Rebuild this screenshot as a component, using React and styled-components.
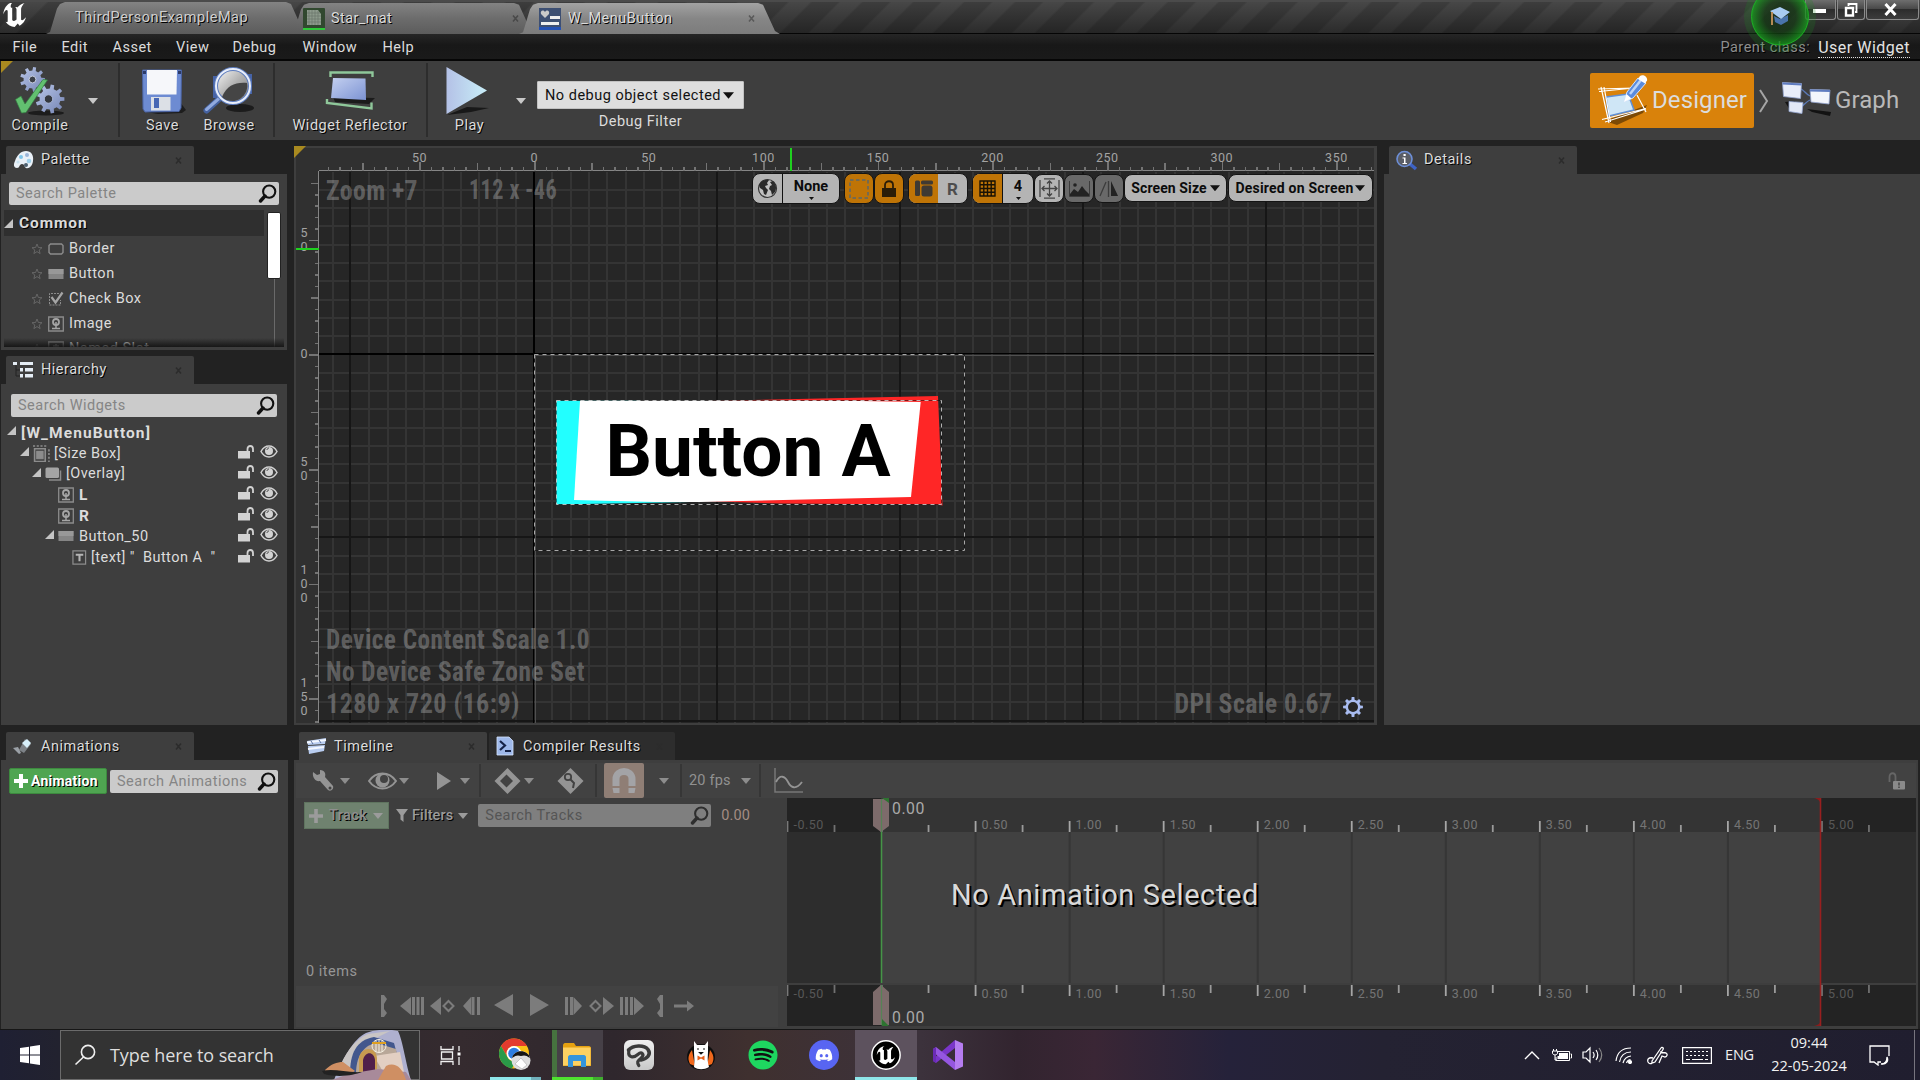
import React from "react";
import styled, { createGlobalStyle } from "styled-components";
import { FaSpotify, FaDiscord } from "react-icons/fa";

const Global = createGlobalStyle`
  * { box-sizing: border-box; }
  body { margin: 0; background: #222; overflow: hidden; }
  svg { display: block; flex: none; }
`;

const Screen = styled.div`
  width: 1920px;
  height: 1080px;
  overflow: hidden;
  display: flex;
  flex-direction: column;
  background: #222;
  color: #dcdcdc;
  font: 14.5px/18px Roboto, "Liberation Sans", sans-serif;
  letter-spacing: 0.5px;
  white-space: pre;
  position: relative;
`;

const Gap = styled.div`
  flex: none;
  width: ${(p) => p.$w || 0}px;
  height: ${(p) => p.$h || 0}px;
`;

const Label = styled.span`
  display: block;
  color: ${(p) => p.$c || "inherit"};
  font-size: ${(p) => p.$size || 14.5}px;
  font-weight: ${(p) => p.$weight || 400};
  letter-spacing: ${(p) => (p.$ls === undefined ? 0.5 : p.$ls)}px;
  padding-top: ${(p) => p.$drop || 0}px;
  text-shadow: ${(p) => (p.$shadow ? "1px 1px 0 #000" : "none")};
`;

/* ---------- title bar ---------- */

const TitleBar = styled.div`
  height: 34px;
  flex: none;
  display: flex;
  background:
    linear-gradient(180deg, rgba(70, 70, 70, 0.25) 0, rgba(18, 18, 18, 0.55) 100%),
    repeating-linear-gradient(135deg, #3c3c3c 0 18px, #4a4a4a 20px 34px, #3c3c3c 36px);
  border-bottom: 1px solid #050505;
  box-shadow: inset 0 2px 0 #4b4b4b;
`;

const LogoCell = styled.div`
  width: 46px;
  padding: 3px 0 0 3px;
  flex: none;
`;

const WindowTab = styled.div`
  display: flex;
  align-items: center;
  flex: none;
  width: ${(p) => p.$w}px;
  height: ${(p) => (p.$top ? 34 - p.$top : 31)}px;
  margin: ${(p) => p.$top || 3}px 0 0 ${(p) => -(p.$overlap || 0)}px;
  padding-left: ${(p) => p.$pad}px;
  z-index: ${(p) => (p.$front ? 2 : 1)};
  background: ${(p) =>
    p.$front
      ? "linear-gradient(180deg,#a2a2a2,#868686 50%,#7c7c7c)"
      : "linear-gradient(180deg,#838383,#6c6c6c 50%,#5c5c5c)"};
  clip-path: polygon(0 100%, 4px 94%, 11px 20%, 14px 6%, 19px 0, calc(100% - 22px) 0, calc(100% - 17px) 6%, calc(100% - 5px) 90%, 100% 100%);
`;

const Spacer = styled.div`
  flex: 1;
`;

const WinButton = styled.div`
  width: ${(p) => p.$w}px;
  height: 20px;
  margin-left: 1px;
  display: flex;
  align-items: center;
  justify-content: center;
  padding-right: ${(p) => p.$pr || 0}px;
  background: linear-gradient(180deg, #6e6e6e, #4a4a4a 45%, #2c2c2c 50%, #3c3c3c);
  border: 1px solid #8b8b8b;
  border-top: 0;
  border-radius: 0 0 3px 3px;
`;

const MenuBar = styled.div`
  height: 27px;
  flex: none;
  display: flex;
  align-items: center;
  padding: 2px 10px 0 12.5px;
  background: linear-gradient(180deg, #262626, #181818 45%, #1a1a1a);
  border-bottom: 2px solid #060606;
`;

const MenuItem = styled.span`
  width: ${(p) => p.$w}px;
  flex: none;
`;

const UserWidgetLink = styled.span`
  font-size: 16px;
  color: #e4e4e4;
  margin-left: 8px;
  border-bottom: 1px dotted #ddd;
  line-height: 19px;
`;

const GlowBadge = styled.div`
  position: absolute;
  left: 1743px;
  top: 0;
  z-index: 3;
`;

/* ---------- tool bar ---------- */

const ToolBar = styled.div`
  height: 79px;
  flex: none;
  display: flex;
  background: #3e3e3e;
  position: relative;
  border-left: 1px solid #222;
`;

const CornerMark = styled.div`
  position: absolute;
  left: ${(p) => p.$x || 0}px;
  top: ${(p) => p.$y || 0}px;
  width: 12px;
  height: 12px;
  background: #a98a20;
  clip-path: polygon(0 0, 100% 0, 0 100%);
`;

const ToolButton = styled.div`
  width: ${(p) => p.$w}px;
  flex: none;
  display: flex;
  flex-direction: column;
  align-items: center;
  padding-top: 4px;
`;

const ToolIcon = styled.div`
  height: 52px;
  display: flex;
  align-items: center;
  justify-content: center;
  padding: 0 ${(p) => p.$pr || 0}px 1px 0;
`;

const Separator = styled.div`
  width: 2px;
  flex: none;
  margin: 2px 0 3px;
  background: #2d2d2d;
`;

const ShortLine = styled.div`
  width: 2px;
  height: 33px;
  flex: none;
  background: #363636;
`;

const CaretCell = styled.div`
  width: ${(p) => p.$w}px;
  flex: none;
  display: flex;
  justify-content: center;
  align-items: center;
`;

const DebugColumn = styled.div`
  width: 207px;
  display: flex;
  flex-direction: column;
  align-items: center;
  padding-top: 20px;
`;

const DebugCombo = styled.div`
  width: 207px;
  height: 28px;
  display: flex;
  align-items: center;
  gap: 2px;
  padding-left: 7px;
  color: #111;
  background: #dedede;
  border: 1px solid #c2c2c2;
  border-radius: 1px;
  margin-bottom: 4px;
`;

const ModeButton = styled.div`
  display: flex;
  align-items: center;
  width: ${(p) => p.$w}px;
  height: 55px;
  margin-top: 12px;
  padding: 0 0 1px ${(p) => p.$pad}px;
  gap: ${(p) => p.$gap}px;
  border-radius: 2px;
  background: ${(p) => (p.$active ? "#d9820b" : "transparent")};
`;

/* ---------- panels ---------- */

const Main = styled.div`
  height: 579px;
  margin-top: 6px;
  flex: none;
  display: flex;
  padding-left: 1px;
`;

const Column = styled.div`
  width: ${(p) => p.$w}px;
  margin-right: ${(p) => p.$gap || 0}px;
  flex: none;
  display: flex;
  flex-direction: column;
`;

const TabStrip = styled.div`
  height: 28px;
  flex: none;
  display: flex;
  gap: 2px;
  padding-left: 5px;
`;

const PanelTab = styled.div`
  width: ${(p) => p.$w || 188}px;
  display: flex;
  align-items: center;
  padding: 0 12px 0 7px;
  background: ${(p) => (p.$idle ? "#2d2d2d" : "#3e3e3e")};
  border-radius: 2px 2px 0 0;
`;

const TabIcon = styled.span`
  width: ${(p) => p.$w || 28}px;
  flex: none;
`;

const PanelBody = styled.div`
  flex: 1;
  min-height: 0;
  background: #3e3e3e;
  overflow: hidden;
  display: flex;
  flex-direction: column;
`;

const HierarchyBody = styled(PanelBody)`
  flex: none;
  height: 341px;
`;

const SearchBox = styled.div`
  height: 23px;
  width: ${(p) => p.$w}px;
  margin: ${(p) => p.$m || 0};
  flex: none;
  display: flex;
  align-items: center;
  justify-content: space-between;
  padding: 0 2px 0 7px;
  border-radius: 2px;
  background: ${(p) => (p.$dim ? "#7f7f7f" : "#cbcbcb")};
  color: ${(p) => (p.$dim ? "#555" : "#858585")};
`;

const PaletteList = styled.div`
  display: flex;
  flex: 1;
  min-height: 0;
  margin: 5px 3px 3px 3px;
  overflow: hidden;
  position: relative;
`;

const PaletteRows = styled.div`
  width: 260px;
`;

const CategoryRow = styled.div`
  height: 26px;
  display: flex;
  align-items: center;
  gap: 6px;
  background: #2f2f2f;
`;

const PaletteRow = styled.div`
  height: 25px;
  display: flex;
  align-items: center;
  padding-left: 27px;
`;

const PaletteGlyph = styled.span`
  width: 21px;
  margin-left: 5px;
`;

const ScrollTrack = styled.div`
  width: 14px;
  margin-left: 3px;
  display: flex;
  flex-direction: column;
  align-items: center;
`;

const ScrollThumb = styled.div`
  width: 14px;
  height: 67px;
  margin-top: 2px;
  background: #fff;
  border: 1px solid #222;
  border-radius: 2px;
`;

const ScrollLine = styled.div`
  width: 1px;
  flex: 1;
  background: #6a6a6a;
`;

const BottomFade = styled.div`
  position: absolute;
  left: 0;
  right: 0;
  bottom: 0;
  height: 9px;
  background: linear-gradient(180deg, rgba(20, 20, 20, 0), rgba(16, 16, 16, 0.85));
`;

const TreeRow = styled.div`
  height: 20.8px;
  flex: none;
  display: flex;
  align-items: center;
  padding-left: ${(p) => p.$indent}px;
`;

const TreeArrow = styled.span`
  width: 13px;
  flex: none;
  padding-bottom: 3px;
`;

const TreeGlyph = styled.span`
  width: ${(p) => p.$w || 21}px;
  flex: none;
`;

const TreeState = styled.span`
  margin-left: auto;
  width: 49px;
  display: flex;
  gap: 5px;
  padding-bottom: 3px;
  align-items: center;
`;

/* ---------- designer viewport ---------- */

const Viewport = styled.div`
  position: relative;
  height: 579px;
  border: 2px solid #3e3e3e;
  border-right-width: 3px;
  background: #262626;
`;

const ViewportBar = styled.div`
  position: absolute;
  right: 0;
  top: 25px;
  width: 622px;
  display: flex;
  align-items: flex-start;
`;

const Pill = styled.div`
  display: flex;
  flex: none;
  width: ${(p) => p.$w}px;
  height: ${(p) => p.$h || 31}px;
  margin: ${(p) => p.$mt || 0}px ${(p) => p.$mr || 0}px 0 0;
  border: 1px solid #141414;
  border-radius: 8px;
  overflow: hidden;
  color: #0c0c0c;
  background: ${(p) => p.$bg || "#b4b4b4"};
`;

const PillPart = styled.div`
  width: ${(p) => p.$w || "auto"};
  flex: ${(p) => (p.$w ? "none" : 1)};
  display: flex;
  flex-direction: ${(p) => (p.$col ? "column" : "row")};
  align-items: center;
  justify-content: center;
  gap: ${(p) => p.$gap || 0}px;
  background: ${(p) => p.$bg || "transparent"};
  border-right: ${(p) => (p.$line ? "1px solid #111" : "0")};
`;

/* ---------- bottom area ---------- */

const Bottom = styled.div`
  height: 297px;
  margin-top: 7px;
  flex: none;
  display: flex;
  padding-left: 1px;
`;

const AnimationTools = styled.div`
  display: flex;
  align-items: center;
  padding: 8px 0 0 8px;
  gap: 3px;
`;

const AddAnimation = styled.div`
  width: 98px;
  height: 26px;
  display: flex;
  align-items: center;
  padding-left: 4px;
  gap: 3px;
  color: #fff;
  background: #4fa551;
  border: 1px solid #3d8a3f;
  border-radius: 2px;
`;

const SequencerBar = styled.div`
  height: 35px;
  margin: 3px 2px 0 2px;
  flex: none;
  display: flex;
  align-items: center;
  background: #424242;
`;

const BarCell = styled.div`
  width: ${(p) => p.$w}px;
  height: 35px;
  flex: none;
  display: flex;
  align-items: center;
  padding-left: ${(p) => p.$pad || 0}px;
  gap: ${(p) => p.$gap || 0}px;
`;

const MagnetBox = styled.div`
  width: 40px;
  height: 35px;
  margin-left: 7px;
  display: flex;
  align-items: center;
  justify-content: center;
  background: #8f7e75;
  border-radius: 2px;
`;

const SequencerBody = styled.div`
  height: 231px;
  display: flex;
`;

const TrackPane = styled.div`
  width: 493px;
  flex: none;
  display: flex;
  flex-direction: column;
`;

const TrackTools = styled.div`
  display: flex;
  align-items: center;
  height: 35px;
  width: 489px;
  padding-left: 10px;
`;

const AddTrack = styled.div`
  width: 85px;
  height: 27px;
  display: flex;
  align-items: center;
  padding-left: 4px;
  gap: 6px;
  color: #8f8f8f;
  background: #6f826f;
  border: 1px solid #5f745f;
`;

const ItemCount = styled.div`
  margin: auto 0 5px 12px;
  color: #969696;
`;

const Transport = styled.div`
  width: 482px;
  height: 41px;
  margin: 0 0 2px 2px;
  background: #424242;
  display: flex;
  align-items: center;
  padding: 0 0 2px 84px;
`;

const TimeArea = styled.div`
  position: relative;
  width: 1129px;
  height: 228px;
`;

const EmptyNotice = styled.div`
  position: absolute;
  left: 164px;
  top: 78px;
  font-size: 29px;
  line-height: 38px;
  letter-spacing: 0.6px;
  color: #dadada;
  text-shadow: 2px 2px 0 #000;
`;

/* ---------- task bar ---------- */

const TaskBar = styled.div`
  height: 51px;
  flex: none;
  display: flex;
  border-top: 1px solid #161616;
  background: linear-gradient(90deg, #1f2033 0, #22222f 3%, #352b2f 24%, #2f272d 32%, #3f302f 39%, #3c323c 48%, #32242f 53%, #3a2635 57%, #25223a 64%, #242232 72%, #201e2f 100%);
  font-family: "Open Sans", "Noto Sans", sans-serif;
  letter-spacing: 0;
  color: #f2f2f2;
`;

const StartCell = styled.div`
  width: 60px;
  display: flex;
  align-items: center;
  justify-content: center;
`;

const TaskSearch = styled.div`
  width: 360px;
  display: flex;
  align-items: center;
  background: #333;
  border: 1px solid #6b6b6b;
  padding-left: 13px;
  color: #dedede;
`;

const TaskCell = styled.div`
  width: ${(p) => p.$w || 61.8}px;
  flex: none;
  display: flex;
  align-items: center;
  justify-content: center;
  padding-top: ${(p) => (p.$active ? 3 : 0)}px;
  background: ${(p) => (p.$active ? "#5d525e" : "transparent")};
  border-bottom: ${(p) => (p.$active ? "3px solid #8ee6ea" : "0")};
`;

const RunningTile = styled.div`
  width: 51px;
  height: 50px;
  display: flex;
  align-items: center;
  justify-content: center;
  background:
    linear-gradient(90deg, ${(p) => p.$c} 0 41px, ${(p) => p.$c2} 41px) 0 47px / 100% 3px no-repeat,
    linear-gradient(90deg, ${(p) => (p.$filled ? "#46723f" : "transparent")} 0 5px, ${(p) => (p.$filled ? "#464047" : "transparent")} 5px);
`;

const TrayCell = styled.div`
  width: ${(p) => p.$w}px;
  flex: none;
  display: flex;
  justify-content: center;
  align-items: center;
`;

const Clock = styled.div`
  width: 90px;
  flex: none;
  text-align: center;
  font-size: 14.5px;
  line-height: 23px;
  padding-top: 1px;
`;

const DesktopEdge = styled.div`
  width: 6px;
  border-left: 1px solid #77757f;
`;

/* ---------- drawings ---------- */

const Caret = ({ w = 10, h = 6, c = "#c8c8c8" }) => (
  <svg width={w} height={h} viewBox="0 0 10 6"><path d="M0 0h10L5 6z" fill={c} /></svg>
);

const CloseMark = ({ c = "#2c2c2c" }) => (
  <svg width="7" height="7" viewBox="0 0 7 7">
    <path d="M1 .5l5 6M6 .5l-5 6" fill="none" stroke={c} strokeWidth="1.600" />
  </svg>
);

const Magnifier = ({ c = "#111" }) => (
  <svg width="19" height="19" viewBox="0 0 19 19" fill="none" stroke={c}>
    <circle cx="11.2" cy="7.6" r="6.1" strokeWidth="2.1" />
    <path d="M7 12 2.500 17" strokeWidth="3.4" strokeLinecap="round" />
  </svg>
);

const U_PATH =
  "M19.13 13.729c-.206.997-1.126 3.557-4.06 4.942l-1.179-1.325-1.988 2a7.338 7.338 0 01-5.804-2.978 2.859 2.859 0 00.65.123c.326.006.678-.114.678-.66v-5.394a.89.89 0 00-1.116-.89c-.92.212-1.656 2.509-1.656 2.509a7.304 7.304 0 012.528-5.597 7.408 7.408 0 013.73-1.721c-1.006.573-1.57 1.507-1.57 2.29 0 1.262.76 1.109.984.923v7.28a1.157 1.157 0 00.148.256 1.075 1.075 0 00.88.445c.76 0 1.747-.868 1.747-.868V9.172c0-.6-.452-1.324-.905-1.572 0 0 .838-.149 1.484.346a5.537 5.537 0 01.387-.425c1.508-1.48 2.929-1.902 4.112-2.112 0 0-2.151 1.69-2.151 3.96 0 1.687.043 5.801.043 5.801.799.771 1.986-.342 3.059-1.441z";

const gearPath = (cx, cy, r, r2, teeth) => {
  let d = "";
  for (let i = 0; i < teeth; i++) {
    const a = (i / teeth) * Math.PI * 2;
    const s = Math.PI / teeth;
    [[a - s * 0.55, r2], [a - s * 0.35, r], [a + s * 0.35, r], [a + s * 0.55, r2]].forEach(([t, q], k) => {
      d += `${i === 0 && k === 0 ? "M" : "L"}${(cx + Math.cos(t) * q).toFixed(2)} ${(cy + Math.sin(t) * q).toFixed(2)}`;
    });
  }
  return d + "z";
};

const CompileIcon = () => (
  <svg width="54" height="51" viewBox="13 64 54 51">
    <defs>
      <linearGradient id="gear" x1="0" y1="0" x2="1" y2="1"><stop offset="0" stopColor="#b9c6e8" /><stop offset="1" stopColor="#7484b4" /></linearGradient>
    </defs>
    <ellipse cx="46" cy="112" rx="18" ry="2.5" fill="#1c1c1c" />
    <path d={gearPath(32.5, 78.5, 12.5, 9, 9)} fill="url(#gear)" />
    <circle cx="32.5" cy="78.5" r="3.400" fill="#3c4048" stroke="#dfe7fa" strokeWidth=".8" />
    <path d={gearPath(50, 98, 14.5, 10.5, 9)} fill="url(#gear)" />
    <circle cx="48.5" cy="98" r="4.2" fill="#35383f" stroke="#b8c5e8" strokeWidth=".8" />
    <path d="M15.5 98.500 21 95l4 8L43 78.500l4.500.5L26 111.500l-4.500.5z" fill="#62c070" stroke="#348042" strokeWidth=".7" />
  </svg>
);

const SaveIcon = () => (
  <svg width="46" height="48" viewBox="141 67 46 48">
    <path d="M147 112l34-10 6 8-4 3-24 1z" fill="#1d1d1d" />
    <path d="M143.500 70h39l-.5 38-2 3.500-34 .5-2-3z" fill="#6d8bd2" stroke="#4a62a0" />
    <path d="M148 70h30l-.5 24.500H148z" fill="#f6f7fa" />
    <path d="M152 97h19.500v13.500H152z" fill="#dce0e6" />
    <path d="M155 98h5v10h-5z" fill="#4868b4" />
    <path d="M144 71h3v3h-3zM179 71h3v3h-3z" fill="#2b3a68" />
  </svg>
);

const BrowseIcon = () => (
  <svg width="52" height="50" viewBox="203 66 52 50">
    <defs>
      <linearGradient id="lens" x1="0" y1="0" x2="1" y2="1">
        <stop offset="0" stopColor="#fafafa" /><stop offset=".5" stopColor="#b0b0b0" /><stop offset="1" stopColor="#777" />
      </linearGradient>
    </defs>
    <ellipse cx="240" cy="108" rx="14" ry="4" fill="#1c1c1c" />
    <path d="M213 76h8v22h-8zM246 74h6v20h-6z" fill="#4663a6" />
    <path d="M206.500 110.500 219 99" stroke="#44619f" strokeWidth="6" strokeLinecap="round" />
    <path d="M206.500 109.500 219 98.500" stroke="#91aadf" strokeWidth="3" strokeLinecap="round" />
    <circle cx="233" cy="86" r="17" fill="url(#lens)" stroke="#5d7cbd" strokeWidth="4" />
    <path d="M222 97c5-12 14-15 25-14 2 9-6 18-14 18-5 0-8-1-11-4z" fill="#454545" />
    <circle cx="233" cy="86" r="17" fill="none" stroke="#e8eefb" strokeWidth="2" />
  </svg>
);

const ReflectorIcon = () => (
  <svg width="52" height="44" viewBox="325 70 52 44">
    <defs>
      <linearGradient id="refl" x1="0" y1="0" x2="1" y2="1"><stop offset="0" stopColor="#c4d0f0" /><stop offset="1" stopColor="#7c93d3" /></linearGradient>
    </defs>
    <path d="M334 98l42 1-6 6-34-2z" fill="#1b1b1b" />
    <path d="M334 79l32.500.5.5 21.500-35-2z" fill="url(#refl)" />
    <path d="M331.500 78v-4.500h42V78" fill="none" stroke="#8fc79a" strokeWidth="2.400" />
    <path d="M328 100v4l44.500 5.500v-6" fill="none" stroke="#8fc79a" strokeWidth="2.400" />
  </svg>
);

const PlayIcon = () => (
  <svg width="46" height="51" viewBox="444 64 46 51">
    <defs>
      <linearGradient id="play" x1="0" y1="0" x2="1" y2="0"><stop offset="0" stopColor="#b4c1e6" /><stop offset="1" stopColor="#c8eef8" /></linearGradient>
    </defs>
    <path d="M447 114l20-8 22 1-18 4z" fill="#181818" />
    <path d="M446.500 66v47L487 89.500z" fill="url(#play)" />
  </svg>
);

const DesignerIcon = () => (
  <svg width="52" height="52" viewBox="1595 74 52 52">
    <path d="M1604 121l42-16-4 8-26 12z" fill="#7d4a05" />
    <path d="M1605 97l22-3 6 16-25 6z" fill="#cfe6f6" stroke="#5f8fd6" strokeWidth="1.500" />
    <g stroke="#fff" strokeWidth="1.200" fill="none">
      <path d="M1597 89l36-1M1598 91.500l30-3M1600 87l8 36M1603 87l6.500 35M1601 119.500l44-11M1604 122l41-13M1636 95l9 17" />
    </g>
    <path d="M1623 102l3-10 11-14 8 5-13 15z" fill="#5a8bdd" stroke="#d4e4fb" />
    <path d="M1629 94l11-14" stroke="#bcd4f7" strokeWidth="2.500" />
    <path d="M1623 102l2.500-8 5 4.500z" fill="#fff" />
    <path d="M1637 79l2-3c3-2.500 8 1 7 4.500l-2 3z" fill="#fdfdfd" />
  </svg>
);

const GraphIcon = () => (
  <svg width="52" height="40" viewBox="1781 80 52 40">
    <path d="M1786 102l10-1 3 11-8-2zM1808 109l24 3-1 4-18-4z" fill="#121212" />
    <path d="M1800 88c6 2 6 6 11 8M1798 108c6 0 8-6 13-8" stroke="#5b7ab8" fill="none" strokeWidth="1.300" />
    <path d="M1783.500 82.500l19 1-1 15-17-2z" fill="#e9eefa" stroke="#93a5cf" strokeWidth=".8" />
    <path d="M1811 89.500l20 .5-1 14-18-2z" fill="#f2f5fc" stroke="#93a5cf" strokeWidth=".8" />
    <path d="M1790 101.500l14 1-1 11-13-2z" fill="#e3e9f6" stroke="#93a5cf" strokeWidth=".8" />
    <path d="M1783.500 82.500l19 1v2l-19-1zM1811 89.500l20 .5v2l-20-.5z" fill="#5f7cc0" />
  </svg>
);

const PaletteIcon = () => (
  <svg width="22" height="20" viewBox="0 0 22 20">
    <path d="M4 18c-3 0-4-3-2-7C4 5 8 1 13 1s8 4 7 10c-.500 5-4 8-7 7-2-1-1-4-4-4s-2 4-5 4z" fill="#e9f0f7" />
    <circle cx="8" cy="7" r="2" fill="#7ec4e8" /><circle cx="14" cy="5" r="2" fill="#9ab5d8" />
    <circle cx="16" cy="11" r="2.300" fill="#9fd0ea" /><circle cx="13" cy="15" r="2" fill="#4d6070" /><circle cx="5" cy="12" r="1.600" fill="#c8e2f0" />
  </svg>
);

const HierarchyIcon = () => (
  <svg width="22" height="17" viewBox="0 0 22 17" fill="#e4ecf4">
    <path d="M3 3v11h4M3 8h4" stroke="#222" fill="none" />
    <path d="M0 0h4v3H0zM7 0h13v3H7zM7 6h3v3.500H7zM12 6h8v3.500h-8zM7 12h3v3.500H7zM12 12h8v3.500h-8z" />
  </svg>
);

const DetailsIcon = () => (
  <svg width="22" height="21" viewBox="0 0 22 21">
    <path d="M14 14l6 5" stroke="#3e63c4" strokeWidth="3.500" />
    <circle cx="8.500" cy="9" r="7.500" fill="#5a5d66" stroke="#6d8fd8" strokeWidth="1.600" />
    <path d="M6.500 7.500h3V13H11v1H6.500v-1H8V8.500H6.500zM7.500 4h2.200v2H7.500z" fill="#fff" />
  </svg>
);

const AnimIcon = () => (
  <svg width="18" height="17" viewBox="0 0 18 17">
    <path d="M6 12l6-11 6 5-7 9z" fill="#7d8287" /><path d="M9 5l5-4 4 4-4 5z" fill="#d7effa" />
    <path d="M0 10l5-1 3 6-2 1z" fill="#9aa0a6" />
  </svg>
);

const TimelineIcon = () => (
  <svg width="21" height="18" viewBox="0 0 21 18">
    <path d="M1 4l19-3-1 6L2 8zM2 9l17-1-1 6-15 3z" fill="#b9cdf0" />
    <path d="M1 5.500l19-2.500M2 12l16-2" stroke="#f4f8ff" strokeWidth="2" /><path d="M5 4l2 3M13 3l2 3" stroke="#5a70a0" />
  </svg>
);

const CompilerIcon = () => (
  <svg width="18" height="20" viewBox="0 0 18 20">
    <path d="M1 1h12l4 4v14H1z" fill="#9fb9ea" stroke="#d6e4ff" strokeWidth=".8" />
    <path d="M4 5l5 4.500L4 14M9 15h6" stroke="#172448" strokeWidth="2.200" fill="none" />
  </svg>
);

const MaterialIcon = () => (
  <svg width="22" height="22" viewBox="0 0 22 22">
    <rect width="22" height="22" rx="1" fill="#31482f" /><path d="M4 2h11l3 4v11H4z" fill="#8d9a8c" />
    <path d="M6 2v15M9 2v15M12 2v15M15 3v14M4 5h13M4 8h14M4 11h14M4 14h14" stroke="#6a776c" strokeWidth=".7" />
    <rect y="20" width="22" height="2" fill="#2fc93a" />
  </svg>
);

const WidgetIcon = () => (
  <svg width="22" height="22" viewBox="0 0 22 22">
    <rect width="22" height="22" fill="#3d4f72" /><rect y="19" width="22" height="3" fill="#2452b5" />
    <path d="M6 10L2 6c-1-3 2-5 4-2 2-3 5-1 4 2z" fill="#c9c9c9" />
    <path d="M11 8h10v3H11zM2 14h18v3H2z" fill="#eee" />
  </svg>
);

const TreeTriangle = ({ s = 9 }) => (
  <svg width={s} height={s} viewBox="0 0 9 9"><path d="M9 0v9H0z" fill="#c4c4c4" /></svg>
);

const Star = () => (
  <svg width="12" height="12" viewBox="0 0 12 12"><path d="M6 1l1.400 3.500 3.600.2-2.800 2.300.9 3.600L6 8.600l-3.100 2 .9-3.600L1 4.700l3.600-.2z" fill="none" stroke="#6a6a6a" strokeWidth=".9" /></svg>
);

const Glyph = ({ kind }) => {
  const s = { width: 16, height: 16, viewBox: "0 0 16 16", fill: "none", stroke: "#8c8c8c" };
  switch (kind) {
    case "border": return <svg {...s}><path d="M2.500 3h11l1.500 1.500v7L13.500 13h-11L1 11.500v-7z" strokeWidth="1.400" /></svg>;
    case "button": return <svg {...s}><path d="M.5 3h15v10H.5z" fill="#858585" stroke="none" /><path d="M.5 3h15v5H.5z" fill="#989898" stroke="none" /></svg>;
    case "check": return <svg {...s}><path d="M11 2.500H1.500v11.500h11V9" strokeDasharray="2 1" /><path d="M3.500 6l4 5.500 7-10" strokeWidth="2.200" stroke="#a5a5a5" /></svg>;
    case "image": return <svg {...s}><path d="M.7 1h14.600v14H.7z" strokeWidth="1.300" /><circle cx="8" cy="6" r="3" strokeWidth="1.800" stroke="#a5a5a5" /><path d="M8 6v6M4 12.500h8" strokeWidth="1.500" stroke="#a5a5a5" /></svg>;
    case "slot": return <svg {...s}><path d="M.7 1h14.600v14H.7zM5 5h6M8 3v6" strokeWidth="1.300" /></svg>;
    case "size": return <svg {...s} width="17" height="17"><path d="M1.500 3.500h10v12h-10z" strokeWidth="1.500" /><path d="M3.500 6h6v7h-6z" fill="#8c8c8c" /><path d="M0 1h13M15 4v12" strokeDasharray="2 1.500" strokeWidth="1.500" /></svg>;
    case "overlay": return <svg {...s} width="17" height="16"><rect x="0" y="1.500" width="13.500" height="10.500" rx="1.500" fill="#a5a5a5" stroke="none" /><path d="M15 4.500V14H3.500" strokeWidth="1.500" /></svg>;
    default: return <svg {...s} width="15" height="15"><path d="M1 1h13.500v14H1z" strokeWidth="1.300" /><path d="M4 5h8M8 5v7" stroke="#b5b5b5" strokeWidth="2.200" /></svg>;
  }
};

const OpenLock = () => (
  <svg width="17" height="14" viewBox="0 0 17 14"><path d="M0 6h12v7.500H0z" fill="#d2d2d2" /><path d="M9.500 6V4c0-4 5.500-4 5.500 0v3" stroke="#d2d2d2" strokeWidth="1.800" fill="none" /></svg>
);

const Eye = () => (
  <svg width="18" height="13" viewBox="0 0 18 13"><path d="M1 6.500C5-.8 13-.8 17 6.500c-4 7.300-12 7.300-16 0z" fill="none" stroke="#d2d2d2" strokeWidth="1.500" /><circle cx="9" cy="6" r="4" fill="#d2d2d2" /><path d="M7 5c0-1 1-2 2-2" stroke="#444" fill="none" /></svg>
);

const range = (n) => Array.from({ length: n }, (_, i) => i);
const GRID = 18.3;
const OX = 534;
const OY = 354;
const STEP = 11.46;

function Canvas() {
  const vertical = range(59).map((i) => i - 11);
  const horizontal = range(31).map((i) => i - 10);
  const xt = range(93).map((i) => i - 18).filter((i) => OX + i * STEP > 322 && OX + i * STEP < 1373);
  const yt = range(52).map((i) => i - 17).filter((i) => OY + i * STEP > 171 && OY + i * STEP < 723);
  return (
    <svg width="1078" height="575" viewBox="296 148 1078 575" fontFamily="Roboto, sans-serif">
      <rect x="319" y="171" width="1055" height="552" fill="#262626" />
      <g stroke="#343434" strokeWidth="2" shapeRendering="crispEdges">
        {vertical.filter((i) => i % 10 !== 0).map((i) => <path key={i} d={`M${Math.round(OX + i * GRID)} 172V723`} />)}
        {horizontal.filter((i) => i % 10 !== 0).map((i) => <path key={i} d={`M319 ${Math.round(OY + i * GRID + 0.4)}H1374`} />)}
      </g>
      <g stroke="#161616" strokeWidth="2" shapeRendering="crispEdges">
        {[350, 717, 900, 1083, 1266].map((x) => <path key={x} d={`M${x} 172V723`} />)}
        <path d="M319 537H1374M319 721H1374" />
      </g>
      <g shapeRendering="crispEdges">
        <path d="M534 172V354M319 354H534" stroke="#000" strokeWidth="2" />
        <path d="M533.5 354V723M534 353.500H1374" stroke="#000" />
        <path d="M535 355V723M535 355H1374" stroke="#505050" />
      </g>
      <g>
        <path d="M556 400.500H640L690 502 556 504.500z" fill="#2ff" />
        <path d="M680 401.500L938 396 938.300 403 942.500 505.500 937 504.500 780 503.500 700 501z" fill="#ff2626" />
        <path d="M580 400.500H682L860 401 920.700 402 911 497 700 502 655 502 574 500z" fill="#fff" />
        <g fill="none" strokeDasharray="4 4" strokeWidth="1">
          <path d="M534.500 354.500H964.500V550.500H534.500z" stroke="#111" strokeDasharray="none" strokeOpacity=".7" />
          <path d="M534.500 354.500H964.500V550.500H534.500z" stroke="#a8a8a8" />
          <path d="M556.500 400.500H941.500V504.500H556.500z" stroke="#000" strokeOpacity=".5" strokeDasharray="none" />
          <path d="M556.500 400.500H941.500V504.500H556.500z" stroke="#dcdcdc" strokeOpacity=".8" />
        </g>
        <text x="605.500" y="476" fontSize="73" fontWeight="700" textLength="285.500" fill="#000">Button A</text>
      </g>
      <rect x="296" y="148" width="1078" height="23" fill="#303030" />
      <rect x="296" y="148" width="22" height="575" fill="#303030" />
      <path d="M319 170.500H1374" stroke="#858585" />
      <path d="M318.500 171V723" stroke="#858585" />
      <g stroke="#747474" shapeRendering="crispEdges">
        {xt.map((i) => <path key={i} strokeWidth="1.500" d={`M${OX + i * STEP + 0.8} ${i % 10 === 0 ? 162 : i % 5 === 0 ? 163 : 167}V171`} />)}
        {yt.map((i) => <path key={i} strokeWidth="1.500" d={`M${i % 10 === 0 ? 309 : i % 5 === 0 ? 311 : 315} ${OY + i * STEP + 1.2}H318`} />)}
      </g>
      <g fontSize="12.500" fill="#a3a3a3" textAnchor="middle">
        {range(9).map((k) => (
          <text key={k} x={OX + (k - 1) * 114.600 + 0.2} y="162">{Math.abs(k - 1) * 50}</text>
        ))}
        {[["50", 239.5], ["0", 353.5], ["50", 468.5], ["100", 583.5], ["150", 697]].map(([t, y], j) =>
          t.split("").map((ch, i) => (
            <text key={`${j}-${i}`} x="304.300" y={y + 4.3 + (i - (t.length - 1) / 2) * 14}>{ch}</text>
          ))
        )}
      </g>
      <path d="M791 148V171M296 249H319" stroke="#1fd01f" strokeWidth="2" />
      <g fontSize="27" fontWeight="700" fill="#fff" fillOpacity=".27" fontFamily="'Roboto Condensed', Roboto, sans-serif">
        <text x="326" y="199.500" textLength="92" lengthAdjust="spacingAndGlyphs">Zoom +7</text>
        <text x="469" y="199" textLength="88" lengthAdjust="spacingAndGlyphs">112 x -46</text>
        <text x="326" y="648.500" textLength="264" lengthAdjust="spacingAndGlyphs">Device Content Scale 1.0</text>
        <text x="326" y="680.500" textLength="259" lengthAdjust="spacingAndGlyphs">No Device Safe Zone Set</text>
        <text x="326" y="712.500" textLength="194" lengthAdjust="spacingAndGlyphs">1280 x 720 (16:9)</text>
        <text x="1174.500" y="712.500" textLength="158" lengthAdjust="spacingAndGlyphs">DPI Scale 0.67</text>
      </g>
      <path d={gearPath(1353, 707, 10, 7.5, 8)} fill="#a9bcf0" />
      <circle cx="1353" cy="707" r="5" fill="#262626" />
    </svg>
  );
}

function TimeRuler() {
  const marks = range(12).map((k) => ({ x: 787.500 + k * 94.040, v: (k - 1) * 0.5 }));
  return (
    <svg width="1129" height="228" viewBox="787 798 1129 228" fontFamily="Roboto, sans-serif">
      <rect x="787" y="798" width="1129" height="34" fill="#343434" />
      <rect x="787" y="832" width="1129" height="151" fill="#414141" />
      <rect x="787" y="985" width="1129" height="41" fill="#343434" />
      <g stroke="#363636" strokeWidth="2">
        {marks.slice(2, 11).map((m) => <path key={m.v} d={`M${m.x} 832V983`} />)}
      </g>
      <path d="M787 798h94v34h-94zM1821 798h95v34h-95zM787 985h94v41h-94zM1821 985h95v41h-95z" fill="#232323" />
      <path d="M787 832h94v151h-94zM1821 832h95v151h-95z" fill="#2d2d2d" />
      {marks.map((m) => (
        <g key={m.v} opacity={m.v < 0 || m.v >= 5 ? 0.65 : 1}>
          <path d={`M${m.x} 821V832M${m.x} 985v11`} stroke="#a6a6a6" strokeWidth="1.800" />
          <path d={`M${m.x + 47} 825V832M${m.x + 47} 985v8`} stroke="#9a9a9a" strokeWidth="1.800" />
          {m.v !== 0 && (
            <g fontSize="12.500" fill="#747474">
              <text x={m.x + 6} y="829">{m.v.toFixed(2)}</text>
              <text x={m.x + 6} y="998">{m.v.toFixed(2)}</text>
            </g>
          )}
        </g>
      ))}
      <path d="M1814 798h7v9c0-5-2-8-7-9zM1814 1026h7v-8c0 5-2 7-7 8z" fill="#8a1c1c" />
      <path d="M1820.500 798V1026" stroke="#981f1f" strokeWidth="1.600" />
      <path d="M881.500 832V983" stroke="#459447" strokeWidth="1.600" />
      <path d="M873 799h16v27l-8 6-8-6zM881 985l8 7v33h-16v-33z" fill="#7d6b6b" />
      <path d="M881.500 799V832M881.500 985V1025" stroke="#568256" strokeWidth="1.200" />
      <path d="M882 798h7v5zM882 1026h7l-7-7z" fill="#2d7330" />
      <g fontSize="15.800" fill="#a9a9a9" letterSpacing=".5">
        <text x="892" y="813.500">0.00</text>
        <text x="892" y="1023">0.00</text>
      </g>
    </svg>
  );
}

const TransportIcons = () => (
  <svg width="314" height="26" viewBox="380 993 314 26" fill="#7c7c7c">
    <path d="M381 995h3l3 4-3 5v5l3 4-3 4h-3z" />
    <path d="M400 1006l11-9v18zM412 997h3v18h-3zM416.500 997h3v18h-3zM421 997h3v18h-3z" />
    <path d="M430 1006l11-9v18z" /><path d="M448.500 1001l5 5-5 5-5-5z" fill="none" stroke="#7c7c7c" strokeWidth="2" />
    <path d="M463 1006l8-9v18zM471.500 997h3v18h-3zM477 997h3v18h-3z" />
    <path d="M494 1005l19-11v22zM549 1005l-19-11v22z" />
    <path d="M565 997h3v18h-3zM570 997h3v18h-3zM582 1006l-8.500-9v18z" />
    <path d="M595.500 1001l5 5-5 5-5-5z" fill="none" stroke="#7c7c7c" strokeWidth="2" /><path d="M614 1006l-11-9v18z" />
    <path d="M620 997h3v18h-3zM625 997h3v18h-3zM630 997h3v18h-3zM644 1006l-10-9v18z" />
    <path d="M663 995h-3l-3 4 3 5v5l-3 4 3 4h3z" />
    <path d="M674 1004.500h13v-4l7 5.500-7 5.500v-4h-13z" />
  </svg>
);

const CaveArt = () => (
  <svg width="92" height="50" viewBox="0 0 92 50">
    <path d="M12 50C20 30 32 8 44 3 54-1 68-1 76 1c5 10 8 34 13 49z" fill="#aeb0cf" />
    <path d="M16 42C22 24 32 10 46 4l22-3-18 9C38 16 32 30 30 46z" fill="#c9c5c4" />
    <path d="M28 44c0-20 6-34 24-37l20 6 8 30z" fill="#42578d" />
    <path d="M34 44c0-16 6-28 20-31l20 6 4 22z" fill="#b8a798" />
    <path d="M52 26l26-4 4 20-22-2z" fill="#e2cfc2" />
    <path d="M37 44V28c2-12 17-12 18 0v14z" fill="#c79a50" /><path d="M41 44V30c2-9 11-9 12 0v13z" fill="#50204a" />
    <path d="M26 44l30-5 28 3 5 8H10z" fill="#a88a9a" />
    <path d="M3 40c6-6 12-8 18-8l12 9-6 3H5zM56 50l8-14c8-4 16 0 20 14z" fill="#cf8f63" />
    <path d="M0 41c12-3 24 2 40 1-8 3-22 6-38 2z" fill="#222" />
    <g stroke="#f5efe0" fill="none"><ellipse cx="57" cy="16" rx="7" ry="6.500" /><path d="M54 10v12M57 9.500v13M60 10v12" /></g>
    <path d="M50 13h14" stroke="#e0a020" strokeWidth="2" />
  </svg>
);

const Chrome = () => (
  <svg width="32" height="34" viewBox="0 0 32 34">
    <circle cx="15" cy="15.500" r="15" fill="#fbc116" />
    <path d="M2 8a15 15 0 0126 0H15a7.500 7.500 0 00-6.500 11z" fill="#e33b2e" />
    <path d="M2 8l7 12c2 3 5 3.500 7.500 3L13 30.400A15 15 0 012 8z" fill="#2a9a48" />
    <circle cx="15" cy="15.500" r="7.400" fill="#fff" /><circle cx="15" cy="15.500" r="5.800" fill="#2d7de0" />
    <circle cx="22" cy="22.500" r="9.500" fill="#dedede" /><path d="M13 20c2-9 16-9 18 0-4-3-6-3-9-2-3-1-5-1-9 2z" fill="#151515" />
    <path d="M16 26l6-6 6 7-5 4z" fill="#fff" stroke="#aaa" strokeWidth=".6" />
  </svg>
);

const Explorer = () => (
  <svg width="28" height="24" viewBox="0 0 28 24">
    <path d="M0 2.500C0 1 1 0 2 0h9l2 3h13c1 0 2 1 2 2v18H0z" fill="#e5a111" />
    <path d="M0 4.500h27.500v18H0z" fill="#fdd162" />
    <path d="M5 24V14c0-1 1-2 2-2h14c1 0 2 1 2 2v10h-5v-6h-8v6z" fill="#3595dc" />
  </svg>
);

const ClipStudio = () => (
  <svg width="30" height="30" viewBox="0 0 30 30">
    <defs>
      <linearGradient id="clip" x1="0" y1="0" x2="0" y2="1"><stop offset="0" stopColor="#f0f0f0" /><stop offset="1" stopColor="#c8c8c8" /></linearGradient>
    </defs>
    <rect width="30" height="30" rx="6" fill="url(#clip)" />
    <path d="M4.500 10C9 5 20 4.500 24 9.500c3.500 5-1 9.500-7 10.500" fill="none" stroke="#3b3b3b" strokeWidth="3.600" strokeLinecap="round" />
    <path d="M4.800 11c-1 7 5 7 9 3.500 4-3.500 7 0 3.500 3.500-3 3-5 3-2.500 7.500" fill="none" stroke="#3b3b3b" strokeWidth="3.200" strokeLinecap="round" />
  </svg>
);

const Llama = () => (
  <svg width="28" height="30" viewBox="0 0 28 30">
    <ellipse cx="14" cy="17" rx="14" ry="13" fill="#0d0d0d" />
    <path d="M3 24c-3-6-1-10 2-14l3 16zM25 24c3-6 1-10-2-14l-3 16z" fill="#f0681c" />
    <path d="M7 1l3 4h8l3-4v10c0 5-1 9 1 16-5 3-11 3-15 0 1-7 0-11 0-16z" fill="#fff" />
    <path d="M10 9h2M16 9h2M12.500 12.500h3L14 14z" stroke="#111" strokeWidth="1.200" />
    <path d="M10.500 15.500l3.500 2 3.500-2v5l-3.500-2-3.500 2z" fill="#e8601c" />
  </svg>
);

const VisualStudio = () => (
  <svg width="30" height="30" viewBox="0 0 30 30">
    <path d="M22 0l8 3.500v23L22 30z" fill="#b57cf0" />
    <path d="M22 0v8L3 23l-3-2v-2z" fill="#7a35c9" /><path d="M22 30v-8L3 7 0 9v3z" fill="#9556e0" />
    <path d="M0 9l3-2v16l-3-2z" fill="#6a2bb5" />
  </svg>
);

/* ---------- composition ---------- */

const Tab = ({ icon, title, w, idle, iconW, drop }) => (
  <PanelTab $w={w} $idle={idle}>
    <TabIcon $w={iconW}>{icon}</TabIcon>
    <Label $shadow $drop={drop}>{title}</Label>
    <Spacer />
    <CloseMark />
  </PanelTab>
);

const paletteItems = [["border", "Border"], ["button", "Button"], ["check", "Check Box"], ["image", "Image"], ["slot", "Named Slot"]];

const treeItems = [
  { indent: 19, arrow: true, kind: "size", text: "[Size Box]" },
  { indent: 31, arrow: true, kind: "overlay", text: "[Overlay]" },
  { indent: 44, kind: "image", text: "L", bold: true },
  { indent: 44, kind: "image", text: "R", bold: true },
  { indent: 44, arrow: true, kind: "button", text: "Button_50" },
  { indent: 58, kind: "text", text: '[text] "  Button A  "', glyphW: 19 },
];

const menuItems = [["File", 49], ["Edit", 51], ["Asset", 63.5], ["View", 56.5], ["Debug", 70], ["Window", 80], ["Help", 60]];

const ORANGE = "#bf7406";

export default function App() {
  return (
    <Screen>
      <Global />
      <TitleBar>
        <LogoCell>
          <svg width="23" height="24" viewBox="4.4 5.3 14.8 14.1" preserveAspectRatio="none"><path d={U_PATH} fill="#fff" /></svg>
        </LogoCell>
        <WindowTab $w={262} $top={2} $pad={29}><Label $shadow $c="#cfcfcf">ThirdPersonExampleMap</Label></WindowTab>
        <WindowTab $w={246} $overlap={18} $pad={13}>
          <MaterialIcon /><Gap $w={6} /><Label $shadow $ls={0.4}>Star_mat</Label><Spacer /><CloseMark c="#4a4a4a" /><Gap $w={17} />
        </WindowTab>
        <WindowTab $w={261} $overlap={17} $pad={20} $front>
          <WidgetIcon /><Gap $w={7} /><Label $shadow>W_MenuButton</Label><Spacer /><CloseMark c="#5a5a5a" /><Gap $w={25} />
        </WindowTab>
        <Spacer />
        <WinButton $w={31} $pr={2}><svg width="14" height="6"><rect width="13" height="4" y="2" fill="#fff" /></svg></WinButton>
        <WinButton $w={28}>
          <svg width="14" height="14" viewBox="0 0 14 14" fill="none" stroke="#fff"><path d="M4.500 3V1h8v8H11" strokeWidth="1.800" /><path d="M2 5h7v7.500H2z" strokeWidth="2.400" /></svg>
        </WinButton>
        <WinButton $w={53} $pr={4}><svg width="13" height="13" viewBox="0 0 13 13"><path d="M1.500 1l10 11M11.500 1l-10 11" stroke="#fff" strokeWidth="3" /></svg></WinButton>
        <Gap $w={1} />
      </TitleBar>
      <GlowBadge>
        <svg width="74" height="54" viewBox="0 0 74 54">
          <defs>
            <radialGradient id="glow"><stop offset="0" stopColor="#1c261c" stopOpacity=".75" /><stop offset=".55" stopColor="#10300f" stopOpacity=".6" /><stop offset="1" stopColor="#14a41a" stopOpacity=".7" /></radialGradient>
          </defs>
          <circle cx="37" cy="16.500" r="36" fill="#1a8a22" fillOpacity=".22" />
          <circle cx="37" cy="16.500" r="28.500" fill="url(#glow)" stroke="#1cae24" />
          <path d="M31 16l6 3 8-4v6l-7 4-6-3z" fill="#4a74ac" />
          <path d="M27 11l10-4 10 5-9 7z" fill="#a8ccf2" />
          <path d="M29 12v13" stroke="#b58a55" strokeWidth="2" />
        </svg>
      </GlowBadge>
      <MenuBar>
        {menuItems.map(([t, w]) => (
          <MenuItem key={t} $w={w}><Label>{t}</Label></MenuItem>
        ))}
        <Spacer />
        <Label $c="#8e8e8e" $shadow>Parent class:</Label>
        <UserWidgetLink>User Widget</UserWidgetLink>
      </MenuBar>

      <ToolBar>
        <CornerMark />
        <ToolButton $w={78}><ToolIcon><CompileIcon /></ToolIcon><Label $shadow>Compile</Label></ToolButton>
        <CaretCell $w={28}><Caret /></CaretCell>
        <Gap $w={11} /><Separator />
        <Gap $w={9} />
        <ToolButton $w={67}><ToolIcon><SaveIcon /></ToolIcon><Label $shadow>Save</Label></ToolButton>
        <ToolButton $w={66}><ToolIcon><BrowseIcon /></ToolIcon><Label $shadow>Browse</Label></ToolButton>
        <Gap $w={11} /><Separator />
        <ToolButton $w={150}><ToolIcon><ReflectorIcon /></ToolIcon><Label $shadow>Widget Reflector</Label></ToolButton>
        <Gap $w={1} /><Separator />
        <ToolButton $w={83}><ToolIcon $pr={5}><PlayIcon /></ToolIcon><Label $shadow>Play</Label></ToolButton>
        <CaretCell $w={20}><Caret /></CaretCell>
        <Gap $w={6} />
        <DebugColumn>
          <DebugCombo><Label $drop={1}>No debug object selected</Label><Caret c="#111" w={11} h={7} /></DebugCombo>
          <Label>Debug Filter</Label>
        </DebugColumn>
        <Spacer />
        <ModeButton $w={164} $pad={6} $gap={4} $active><DesignerIcon /><Label $size={24} $ls={0.1}>Designer</Label></ModeButton>
        <CaretCell $w={20}>
          <svg width="10" height="24" viewBox="0 0 10 24"><path d="M1 1l7 11-7 11" stroke="#a5a5a5" strokeWidth="2" fill="none" /></svg>
        </CaretCell>
        <ModeButton $w={146} $pad={6} $gap={3}><GraphIcon /><Label $size={24} $ls={0.1} $c="#b9b9b9">Graph</Label></ModeButton>
      </ToolBar>

      <Main>
        <Column $w={286} $gap={7}>
          <TabStrip><Tab icon={<PaletteIcon />} title="Palette" /></TabStrip>
          <PanelBody>
            <SearchBox $w={270} $m="8px 0 0 8px"><Label>Search Palette</Label><Magnifier /></SearchBox>
            <PaletteList>
              <PaletteRows>
                <CategoryRow><TreeTriangle /><Label $size={15.5} $weight={700} $ls={0.9} $shadow>Common</Label></CategoryRow>
                {paletteItems.map(([k, t]) => (
                  <PaletteRow key={k}><Star /><PaletteGlyph><Glyph kind={k} /></PaletteGlyph><Label>{t}</Label></PaletteRow>
                ))}
              </PaletteRows>
              <ScrollTrack><ScrollThumb /><ScrollLine /></ScrollTrack>
              <BottomFade />
            </PaletteList>
          </PanelBody>
          <Gap $h={6} />
          <TabStrip><Tab icon={<HierarchyIcon />} title="Hierarchy" /></TabStrip>
          <HierarchyBody>
            <SearchBox $w={266} $m="10px 0 5px 10px"><Label $drop={1}>Search Widgets</Label><Magnifier /></SearchBox>
            <TreeRow $indent={6}><TreeArrow><TreeTriangle /></TreeArrow><Gap $w={1} /><Label $size={15.5} $weight={700} $ls={1.1} $drop={1}>[W_MenuButton]</Label></TreeRow>
            {treeItems.map((n) => (
              <TreeRow key={n.text} $indent={n.indent}>
                <TreeArrow>{n.arrow && <TreeTriangle />}</TreeArrow>
                <TreeGlyph $w={n.glyphW}><Glyph kind={n.kind} /></TreeGlyph>
                <Label $weight={n.bold ? 700 : 400} $size={n.bold ? 15.5 : 14.5} $ls={0.45} $drop={1}>{n.text}</Label>
                <TreeState><OpenLock /><Eye /></TreeState>
              </TreeRow>
            ))}
          </HierarchyBody>
        </Column>

        <Column $w={1083} $gap={7}>
          <Viewport>
            <Canvas />
            <CornerMark $x={-2} $y={-2} />
            <ViewportBar>
              <Pill $w={88} $mr={4}>
                <PillPart $w="30px" $line>
                  <svg width="21" height="21" viewBox="0 0 21 21"><circle cx="10.500" cy="10.500" r="9" fill="#c0c0c0" stroke="#333" strokeWidth="1.200" /><path d="M2 7c2-4 6-6 10-5l-2 3 1 2-3 1 1 2 2 2-2 5-2-1-1-4-3-2zM13 4l3-1c3 3 4 7 2 11l-3 3-1-4-2-2 1-3 2-1z" fill="#2a2a2a" /></svg>
                </PillPart>
                <PillPart $col $gap={1}><Label $size={14.5} $weight={700} $ls={0}>None</Label><Caret w={5} h={3} c="#111" /></PillPart>
              </Pill>
              <Pill $w={30} $bg={ORANGE}>
                <PillPart><svg width="22" height="22"><rect x="2" y="2" width="18" height="18" fill="none" stroke="#756a50" strokeWidth="2" strokeDasharray="3.5 2.5" /></svg></PillPart>
              </Pill>
              <Pill $w={30} $bg={ORANGE} $mr={4}>
                <PillPart><svg width="14" height="17" viewBox="0 0 14 17"><path d="M0 8h14v9H0z" fill="#2b1d08" /><path d="M3 8V5c0-5 8-5 8 0v3" fill="none" stroke="#2b1d08" strokeWidth="1.800" /></svg></PillPart>
              </Pill>
              <Pill $w={60} $mr={4}>
                <PillPart $w="29px" $bg={ORANGE}><svg width="18" height="17" viewBox="0 0 18 17" fill="#3f3a33"><rect y=".5" width="5" height="15.500" rx="1.500" /><rect x="6" y=".5" width="12" height="4" rx="1.500" /><rect x="6.500" y="5.500" width="11" height="11" rx="2.500" /></svg></PillPart>
                <PillPart><Label $size={17} $weight={700} $ls={0} $c="#4d4d4d">R</Label></PillPart>
              </Pill>
              <Pill $w={62}>
                <PillPart $w="30px" $bg={ORANGE} $line><svg width="17" height="17" viewBox="0 0 17 17"><path d="M1 .5v16M4.800.5v16M8.500.5v16M12.200.5v16M16 .5v16M.5 1h16M.5 4.800h16M.5 8.500h16M.5 12.200h16M.5 16h16" stroke="#1a1204" strokeWidth="1.400" /></svg></PillPart>
                <PillPart $col $gap={1}><Label $weight={700} $ls={0}>4</Label><Caret w={5} h={3} c="#111" /></PillPart>
              </Pill>
              <Pill $w={30} $h={29} $mt={1}>
                <PillPart><svg width="21" height="21" viewBox="0 0 21 21" stroke="#444" fill="none" strokeWidth="1.300"><path d="M1 2v17M20 2v17M3 10.500h15M10.500 3v15M5.500 8L3 10.500 5.500 13M15.500 8l2.500 2.500-2.500 2.500M8 5.500L10.500 3 13 5.500M8 15.500l2.500 2.500 2.500-2.500M5 .8h11M5 20.200h11" /></svg></PillPart>
              </Pill>
              <Pill $w={30} $h={29} $mt={1} $bg="#696969">
                <PillPart><svg width="21" height="16" viewBox="0 0 21 16"><path d="M.5 0v15.500h20V0" stroke="#3c3c3c" fill="none" /><circle cx="6" cy="4" r="1.800" fill="#222" /><path d="M1 13l4-5 4 3 4-6 3 4 4 4v2H1z" fill="#222" /></svg></PillPart>
              </Pill>
              <Pill $w={30} $h={29} $mt={1} $bg="#696969">
                <PillPart><svg width="20" height="16" viewBox="0 0 20 16"><path d="M1 15L7 1M9.500 0v16" stroke="#3c3c3c" fill="none" strokeWidth="1.300" /><path d="M12 0v15h7z" fill="#222" /></svg></PillPart>
              </Pill>
              <Pill $w={103} $h={28} $mt={1} $mr={1}><PillPart $gap={3}><Label $size={14} $weight={700} $ls={0.1}>Screen Size</Label><Caret c="#111" w={10} h={6.5} /></PillPart></Pill>
              <Pill $w={145} $h={28} $mt={1}><PillPart $gap={2}><Label $size={14} $weight={700} $ls={0.2}>Desired on Screen</Label><Caret c="#111" w={10} h={6.5} /></PillPart></Pill>
            </ViewportBar>
          </Viewport>
        </Column>

        <Column $w={536}>
          <TabStrip><Tab icon={<DetailsIcon />} title="Details" /></TabStrip>
          <PanelBody />
        </Column>
      </Main>

      <Bottom>
        <Column $w={287} $gap={6}>
          <TabStrip><Tab icon={<AnimIcon />} title="Animations" drop={1} /></TabStrip>
          <PanelBody>
            <AnimationTools>
              <AddAnimation>
                <svg width="14" height="14" viewBox="0 0 14 14"><path d="M7 0v14M0 7h14" stroke="#fff" strokeWidth="4" /></svg>
                <Label $weight={700} $ls={0.25} $size={14} $shadow>Animation</Label>
              </AddAnimation>
              <SearchBox $w={168}><Label $drop={1}>Search Animations</Label><Magnifier /></SearchBox>
            </AnimationTools>
          </PanelBody>
        </Column>

        <Column $w={1624}>
          <TabStrip>
            <Tab icon={<TimelineIcon />} title="Timeline" iconW={28} drop={1} />
            <Tab icon={<CompilerIcon />} title="Compiler Results" idle w={186} iconW={27} drop={1} />
          </TabStrip>
          <PanelBody>
            <SequencerBar>
              <BarCell $w={72} $pad={16} $gap={6}>
                <svg width="22" height="22" viewBox="0 0 22 22"><path d="M1 2l4 3 3-1V0c5 0 6 4 5 7l8 9c1 3-2 6-5 4L8 11c-4 1-8-3-7-9z" fill="#949494" /><circle cx="18" cy="18" r="1.500" fill="#424242" /></svg>
                <Caret c="#8d8d8d" />
              </BarCell>
              <BarCell $w={68} $gap={2}>
                <svg width="29" height="18" viewBox="0 0 29 18"><path d="M1 9C8-1 21-1 28 9c-7 10-20 10-27 0z" fill="none" stroke="#949494" strokeWidth="2" /><circle cx="14.500" cy="8.500" r="7" fill="#949494" /><circle cx="16" cy="7" r="4" fill="#424242" /></svg>
                <Caret c="#8d8d8d" />
              </BarCell>
              <BarCell $w={43} $pad={1} $gap={9}>
                <svg width="14" height="18"><path d="M0 0l14 9-14 9z" fill="#949494" /></svg><Caret c="#8d8d8d" />
              </BarCell>
              <ShortLine />
              <BarCell $w={76} $pad={13} $gap={3}>
                <svg width="27" height="26" viewBox="0 0 27 26"><path d="M13.500 0l13 13-13 13L.5 13z" fill="#949494" /><path d="M12.500 6.500l6.500 6.500-6.500 6.500L6 13z" fill="#424242" /></svg>
                <Caret c="#8d8d8d" />
              </BarCell>
              <BarCell $w={38}>
                <svg width="27" height="26" viewBox="0 0 27 26"><path d="M13.500 0l13 13-13 13L.5 13z" fill="#949494" /><circle cx="11" cy="9" r="3.200" fill="none" stroke="#424242" strokeWidth="1.800" /><path d="M13 11l4 4-1 5" stroke="#424242" fill="none" strokeWidth="2" /></svg>
              </BarCell>
              <ShortLine />
              <MagnetBox>
                <svg width="24" height="25" viewBox="0 0 24 25"><path d="M4 18v-7c0-10 16-10 16 0v7" fill="none" stroke="#a3a3a6" strokeWidth="7" /><path d="M.5 20h7v5h-6zM16.500 20h7l-1 5h-6z" fill="#a3a3a6" /></svg>
              </MagnetBox>
              <BarCell $w={36} $pad={15}><Caret c="#8d8d8d" /></BarCell>
              <ShortLine />
              <BarCell $w={77} $pad={7} $gap={10}><Label $c="#919191" $ls={0.2} $drop={1}>20 fps</Label><Caret c="#8d8d8d" /></BarCell>
              <ShortLine />
              <BarCell $w={44} $pad={13}>
                <svg width="29" height="25" viewBox="0 0 29 25" fill="none" stroke="#949494"><path d="M1 0v24h28" strokeWidth="1.500" stroke="#777" /><path d="M2 14c4-8 9-6 12 0s8 8 14 0" strokeWidth="1.800" /></svg>
              </BarCell>
              <Spacer />
              <svg width="17" height="18" viewBox="0 0 17 18"><path d="M1.500 10V5c0-5 6-5 6 0v4" fill="none" stroke="#666" strokeWidth="1.800" /><rect x="5" y="9" width="12" height="8.500" rx="1" fill="#8a8a8a" /><path d="M11 10.500v3M11 14.500v1.500" stroke="#444" strokeWidth="1.500" /></svg>
              <Gap $w={11} />
            </SequencerBar>
            <SequencerBody>
              <TrackPane>
                <TrackTools>
                  <AddTrack>
                    <svg width="14" height="14" viewBox="0 0 14 14"><path d="M7 0v14M0 7h14" stroke="#9b9b9b" strokeWidth="3.600" /></svg>
                    <Label $shadow $weight={500} $ls={0.4}>Track</Label><Caret c="#9b9b9b" />
                  </AddTrack>
                  <Gap $w={7} />
                  <svg width="12" height="13" viewBox="0 0 12 13"><path d="M0 0h12L7.500 6v7l-3-2.500V6z" fill="#9b9b9b" /></svg>
                  <Gap $w={4} />
                  <Label $c="#9b9b9b" $weight={500} $ls={0.1} $shadow>Filters</Label>
                  <Gap $w={5} /><Caret c="#9b9b9b" />
                  <Gap $w={10} />
                  <SearchBox $w={233} $dim><Label>Search Tracks</Label><Magnifier c="#2e2e2e" /></SearchBox>
                  <Gap $w={10} />
                  <Label $c="#a38c83" $ls={0.1}>0.00</Label>
                </TrackTools>
                <ItemCount>0 items</ItemCount>
                <Transport><TransportIcons /></Transport>
              </TrackPane>
              <TimeArea>
                <TimeRuler />
                <EmptyNotice>No Animation Selected</EmptyNotice>
              </TimeArea>
            </SequencerBody>
          </PanelBody>
        </Column>
      </Bottom>

      <TaskBar>
        <StartCell>
          <svg width="20" height="20" viewBox="0 0 20 20"><path d="M0 3l9-1.300V9.500H0zM10 1.500L20 0v9.500H10zM0 10.500h9v7.800L0 17zM10 10.500h10V20l-10-1.500z" fill="#fff" /></svg>
        </StartCell>
        <TaskSearch>
          <svg width="22" height="22" viewBox="0 0 22 22" fill="none" stroke="#f0f0f0" strokeWidth="1.600"><circle cx="14" cy="8" r="6.600" /><path d="M9.500 13L1.500 20.500" /></svg>
          <Gap $w={14} />
          <Label $size={18} $ls={-0.1}>Type here to search</Label>
          <Spacer />
          <CaveArt /><Gap $w={5} />
        </TaskSearch>
        <TaskCell $w={64.5}>
          <svg width="21" height="19" viewBox="0 0 21 19" fill="none" stroke="#f0f0f0" strokeWidth="1.300"><path d="M1 0v3.500h12V0M1.500 6h11v7h-11zM1 19v-3.500h12V19M19 0v5M19 11v8" /><path d="M17.500 6.500h3v3h-3z" fill="#fff" stroke="none" /></svg>
          <Gap $w={4} />
        </TaskCell>
        <TaskCell><RunningTile $c="#8ee6ea" $c2="#70b0bb"><Chrome /></RunningTile></TaskCell>
        <TaskCell><RunningTile $c="#4fe330" $c2="#3fae2e" $filled><Explorer /></RunningTile></TaskCell>
        <TaskCell><ClipStudio /></TaskCell>
        <TaskCell><Llama /></TaskCell>
        <TaskCell>
          <svg width="30" height="30" viewBox="0 0 30 30"><circle cx="15" cy="15" r="13" fill="#111" /><FaSpotify size={30} color="#1ed760" /></svg>
        </TaskCell>
        <TaskCell>
          <svg width="30" height="30" viewBox="0 0 30 30"><circle cx="15" cy="15" r="15" fill="#5865f2" /><FaDiscord x="6" y="6" size={18} color="#fff" /></svg>
        </TaskCell>
        <TaskCell $active>
          <svg width="30" height="30" viewBox="0 0 24 24"><circle cx="12" cy="12" r="11.300" fill="#000" stroke="#fff" strokeWidth="1.200" /><path d={U_PATH} fill="#fff" /></svg>
        </TaskCell>
        <TaskCell><VisualStudio /></TaskCell>
        <Spacer />
        <TrayCell $w={32}><svg width="16" height="9" viewBox="0 0 16 9"><path d="M1 8l7-7 7 7" fill="none" stroke="#fff" strokeWidth="1.400" /></svg></TrayCell>
        <TrayCell $w={28}><svg width="20" height="14" viewBox="0 0 20 14"><path d="M6 3.500h11.500v9H4V9" fill="none" stroke="#fff" /><path d="M7 5h9v6H5.500V8H7z" fill="#fff" /><path d="M18.500 6h1v4h-1" stroke="#fff" /><path d="M.5 3h5v2c0 2.500-5 2.500-5 0zM1.500 1v2M4.500 1v2M3 7v5h2" fill="none" stroke="#fff" strokeWidth="1" /></svg></TrayCell>
        <TrayCell $w={32}><svg width="21" height="18" viewBox="0 0 21 18" fill="none" stroke="#fff" strokeWidth="1.200"><path d="M1 6h3l4-4v14l-4-4H1zM11 6c1.500 2 1.500 4 0 6M14 4c2.500 3.500 2.500 6.500 0 10" /><path d="M17 2c3.500 4.500 3.500 9.500 0 14" stroke="#888" /></svg></TrayCell>
        <TrayCell $w={31}><svg width="18" height="18" viewBox="0 0 18 18" fill="none" stroke="#fff" strokeWidth="1.200"><path d="M1 15C2 7 7 2 16 2M4.500 16C5.500 10 9 6 16 6M8 17c1-4 3-6.500 8-7M11.500 17c.500-2 1.500-3 4-3.500" /><circle cx="15" cy="16" r="1.500" fill="#fff" /></svg></TrayCell>
        <TrayCell $w={36}><svg width="21" height="19" viewBox="0 0 21 19" fill="none" stroke="#fff" strokeWidth="1.300"><path d="M5 15L14 2c1-1.500 3 0 2 1.500L8 16l-3 1zM6 12c-4-1-6 1-5 4 1 2 3 2 4 1M13 6l6 1c2 1 1 4-1 4l-3-1-3 7" /></svg></TrayCell>
        <TrayCell $w={44}><svg width="30" height="17" viewBox="0 0 30 17" fill="none" stroke="#fff" strokeWidth="1.200"><path d="M.6.6h28.800v15.800H.6z" /><path d="M4 4.500h22M4 8.500h22" strokeDasharray="2 2" /><path d="M4 12.500h4M10 12.500h11M23 12.500h3" /></svg></TrayCell>
        <TrayCell $w={41}><Label $size={14.5} $ls={-0.2}>ENG</Label></TrayCell>
        <Gap $w={4} />
        <Clock>09:44{"\n"}22-05-2024</Clock>
        <TrayCell $w={50}>
          <svg width="21" height="21" viewBox="0 0 21 21" fill="none" stroke="#fff" strokeWidth="1.300"><path d="M12 17H9v3l-4-3H1V1h19v10" /><path d="M18 12c2 4-1 8-6 7 4 0 6-3 6-7z" fill="#fff" /></svg>
        </TrayCell>
        <Gap $w={10} />
        <DesktopEdge />
      </TaskBar>
    </Screen>
  );
}
